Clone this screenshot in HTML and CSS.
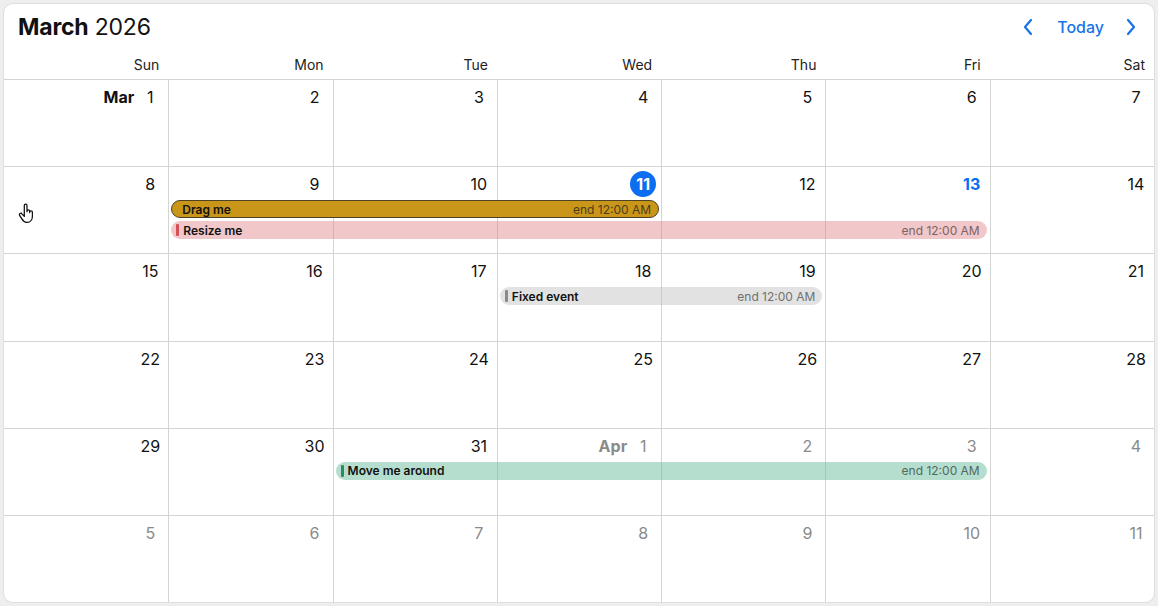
FILE: index.html
```html
<!DOCTYPE html>
<html lang="en">
<head>
<meta charset="utf-8">
<title>March 2026</title>
<link rel="stylesheet" href="styles.css">
</head>
<body>
<div class="card">
  <header class="top">
    <h1 class="title"><b>March</b> 2026</h1>
    <nav class="nav">
      <button class="chev" aria-label="Previous month"><svg viewBox="0 0 12 20" width="12" height="20"><path d="M9 3L3 10l6 7" fill="none" stroke="currentColor" stroke-width="2.2" stroke-linecap="round" stroke-linejoin="round"/></svg></button>
      <button class="today">Today</button>
      <button class="chev" aria-label="Next month"><svg viewBox="0 0 12 20" width="12" height="20"><path d="M3 3l6 7-6 7" fill="none" stroke="currentColor" stroke-width="2.2" stroke-linecap="round" stroke-linejoin="round"/></svg></button>
    </nav>
  </header>
  <div class="dow">
    <div>Sun</div><div>Mon</div><div>Tue</div><div>Wed</div><div>Thu</div><div>Fri</div><div>Sat</div>
  </div>
  <div class="weeks">
    <div class="week">
      <div class="cell c1"><span class="mon">Mar</span><span class="num">1</span></div>
      <div class="cell c2"><span class="num">2</span></div>
      <div class="cell c3"><span class="num">3</span></div>
      <div class="cell c4"><span class="num">4</span></div>
      <div class="cell c5"><span class="num">5</span></div>
      <div class="cell c6"><span class="num">6</span></div>
      <div class="cell c7"><span class="num">7</span></div>
    </div>
    <div class="week">
      <div class="cell c1"><span class="num">8</span></div>
      <div class="cell c2"><span class="num">9</span></div>
      <div class="cell c3"><span class="num">10</span></div>
      <div class="cell c4"><span class="num today-num">11</span></div>
      <div class="cell c5"><span class="num">12</span></div>
      <div class="cell c6"><span class="num sel-num">13</span></div>
      <div class="cell c7"><span class="num">14</span></div>
      <div class="event ev-drag r2 span-2-5"><span class="ev-title">Drag me</span><span class="ev-end">end 12:00 AM</span></div>
      <div class="event ev-resize r3 span-2-7"><span class="stripe"></span><span class="ev-title">Resize me</span><span class="ev-end">end 12:00 AM</span></div>
      <svg class="cursor" viewBox="0 0 20 24" width="18" height="22"><path d="M7 12V3.6a1.5 1.5 0 0 1 3 0V10.5M10 10a1.5 1.5 0 0 1 3 0v1.5M13 11.2a1.5 1.5 0 0 1 3 0v4.3c0 4-2.4 6.8-5.8 6.8H9.5c-2.4 0-3.8-1.4-5.2-3.8L1.8 14.6a1.5 1.5 0 0 1 2.5-1.7L7 15.8V12" fill="#fff" stroke="#111" stroke-width="1.4" stroke-linejoin="round" stroke-linecap="round"/></svg>
    </div>
    <div class="week">
      <div class="cell c1"><span class="num">15</span></div>
      <div class="cell c2"><span class="num">16</span></div>
      <div class="cell c3"><span class="num">17</span></div>
      <div class="cell c4"><span class="num">18</span></div>
      <div class="cell c5"><span class="num">19</span></div>
      <div class="cell c6"><span class="num">20</span></div>
      <div class="cell c7"><span class="num">21</span></div>
      <div class="event ev-fixed r2 span-4-6"><span class="stripe"></span><span class="ev-title">Fixed event</span><span class="ev-end">end 12:00 AM</span></div>
    </div>
    <div class="week">
      <div class="cell c1"><span class="num">22</span></div>
      <div class="cell c2"><span class="num">23</span></div>
      <div class="cell c3"><span class="num">24</span></div>
      <div class="cell c4"><span class="num">25</span></div>
      <div class="cell c5"><span class="num">26</span></div>
      <div class="cell c6"><span class="num">27</span></div>
      <div class="cell c7"><span class="num">28</span></div>
    </div>
    <div class="week">
      <div class="cell c1"><span class="num">29</span></div>
      <div class="cell c2"><span class="num">30</span></div>
      <div class="cell c3"><span class="num">31</span></div>
      <div class="cell c4 other"><span class="mon">Apr</span><span class="num">1</span></div>
      <div class="cell c5 other"><span class="num">2</span></div>
      <div class="cell c6 other"><span class="num">3</span></div>
      <div class="cell c7 other"><span class="num">4</span></div>
      <div class="event ev-move r2 span-3-7"><span class="stripe"></span><span class="ev-title">Move me around</span><span class="ev-end">end 12:00 AM</span></div>
    </div>
    <div class="week">
      <div class="cell c1 other"><span class="num">5</span></div>
      <div class="cell c2 other"><span class="num">6</span></div>
      <div class="cell c3 other"><span class="num">7</span></div>
      <div class="cell c4 other"><span class="num">8</span></div>
      <div class="cell c5 other"><span class="num">9</span></div>
      <div class="cell c6 other"><span class="num">10</span></div>
      <div class="cell c7 other"><span class="num">11</span></div>
    </div>
  </div>
</div>
</body>
</html>
```
FILE: styles.css
```css
* { box-sizing: border-box; }
html, body { margin: 0; height: 100%; }
body {
  background: #eeeeee;
  padding: 3px 3px 3px 3px;
  font-family: Inter, "Liberation Sans", Arial, sans-serif;
  color: #111;
}
.card {
  height: 600px;
  background: #fff;
  border: 1px solid #dedede;
  border-radius: 10px;
  overflow: hidden;
  display: flex;
  flex-direction: column;
  position: relative;
}
.top {
  height: 47px;
  flex: none;
  display: flex;
  align-items: center;
  justify-content: space-between;
  padding: 0 8px 0 14px;
}
.title {
  margin: 0;
  font-size: 23px;
  font-weight: 400;
  letter-spacing: -0.2px;
  padding-bottom: 2px;
}
.title b { font-weight: 700; }
.nav { display: flex; align-items: center; gap: 0; padding-bottom: 2px; }
.nav button {
  background: none;
  border: 0;
  color: #1a73e8;
  font-family: inherit;
  cursor: pointer;
  padding: 0;
  display: flex;
  align-items: center;
}
.chev { width: 30px; justify-content: center; }
.today { font-size: 16px; font-weight: 500; margin: 0 12px 0 14px; }
.dow {
  height: 29px;
  flex: none;
  display: grid;
  grid-template-columns: repeat(7, 1fr);
  border-bottom: 1px solid #d4d4d4;
  font-size: 14px;
  color: #222;
}
.dow div { text-align: right; padding: 5px 9px 0 0; }
.weeks { flex: 1; display: flex; flex-direction: column; }
.week {
  flex: 1;
  display: grid;
  grid-template-columns: repeat(7, 1fr);
  grid-template-rows: 33px 21px 21px 1fr;
  border-bottom: 1px solid #d4d4d4;
  position: relative;
}
.week:last-child { border-bottom: 0; }
.cell {
  grid-row: 1 / -1;
  display: flex;
  justify-content: flex-end;
  align-items: flex-start;
  gap: 3px;
  padding: 4px 5px 0 0;
  border-left: 1px solid #d4d4d4;
}
.c1 { grid-column: 1; border-left: 0; }
.c2 { grid-column: 2; }
.c3 { grid-column: 3; }
.c4 { grid-column: 4; }
.c5 { grid-column: 5; }
.c6 { grid-column: 6; }
.c7 { grid-column: 7; }
.num {
  min-width: 26px;
  height: 26px;
  line-height: 26px;
  text-align: center;
  font-size: 16px;
  border-radius: 50%;
}
.mon { font-size: 16px; font-weight: 700; line-height: 26px; }
.other { color: #8a8a8a; }
.today-num { background: #0b6ef0; color: #fff; font-weight: 700; }
.sel-num { color: #0b6ef0; font-weight: 700; }
.event {
  position: relative;
  z-index: 2;
  height: 18px;
  margin: 0 3px 0 3px;
  border-radius: 9px;
  display: flex;
  align-items: center;
  font-size: 12px;
  padding: 0 7px 0 4px;
  align-self: start;
}
.r2 { grid-row: 2; }
.r3 { grid-row: 3; }
.span-2-5 { grid-column: 2 / 5; margin-right: 2px; }
.span-2-7 { grid-column: 2 / 7; }
.span-4-6 { grid-column: 4 / 6; }
.span-3-7 { grid-column: 3 / 7; }
.stripe {
  width: 3px;
  height: 12px;
  border-radius: 1px;
  margin: 0 4px 0 1px;
  flex: none;
}
.ev-title { font-weight: 600; color: #111; }
.ev-end { margin-left: auto; color: #6a6a6a; }
.ev-drag {
  background: #c9961a;
  border: 1px solid #4d4326;
  padding-left: 10px;
}
.ev-drag .ev-end { color: #4e3d1c; }
.ev-resize { background: rgba(224, 130, 136, 0.45); }
.ev-resize .stripe { background: #d5505a; }
.ev-resize .ev-end { color: #7c6364; }
.ev-fixed { background: rgba(185, 185, 185, 0.42); }
.ev-fixed .stripe { background: #8a8a8a; }
.ev-fixed .ev-end { color: #707070; }
.ev-move { background: rgba(108, 190, 158, 0.5); }
.ev-move .stripe { background: #2d8a68; }
.ev-move .ev-end { color: #51695f; }
.cursor { position: absolute; left: 14px; top: 35px; z-index: 3; }
```
